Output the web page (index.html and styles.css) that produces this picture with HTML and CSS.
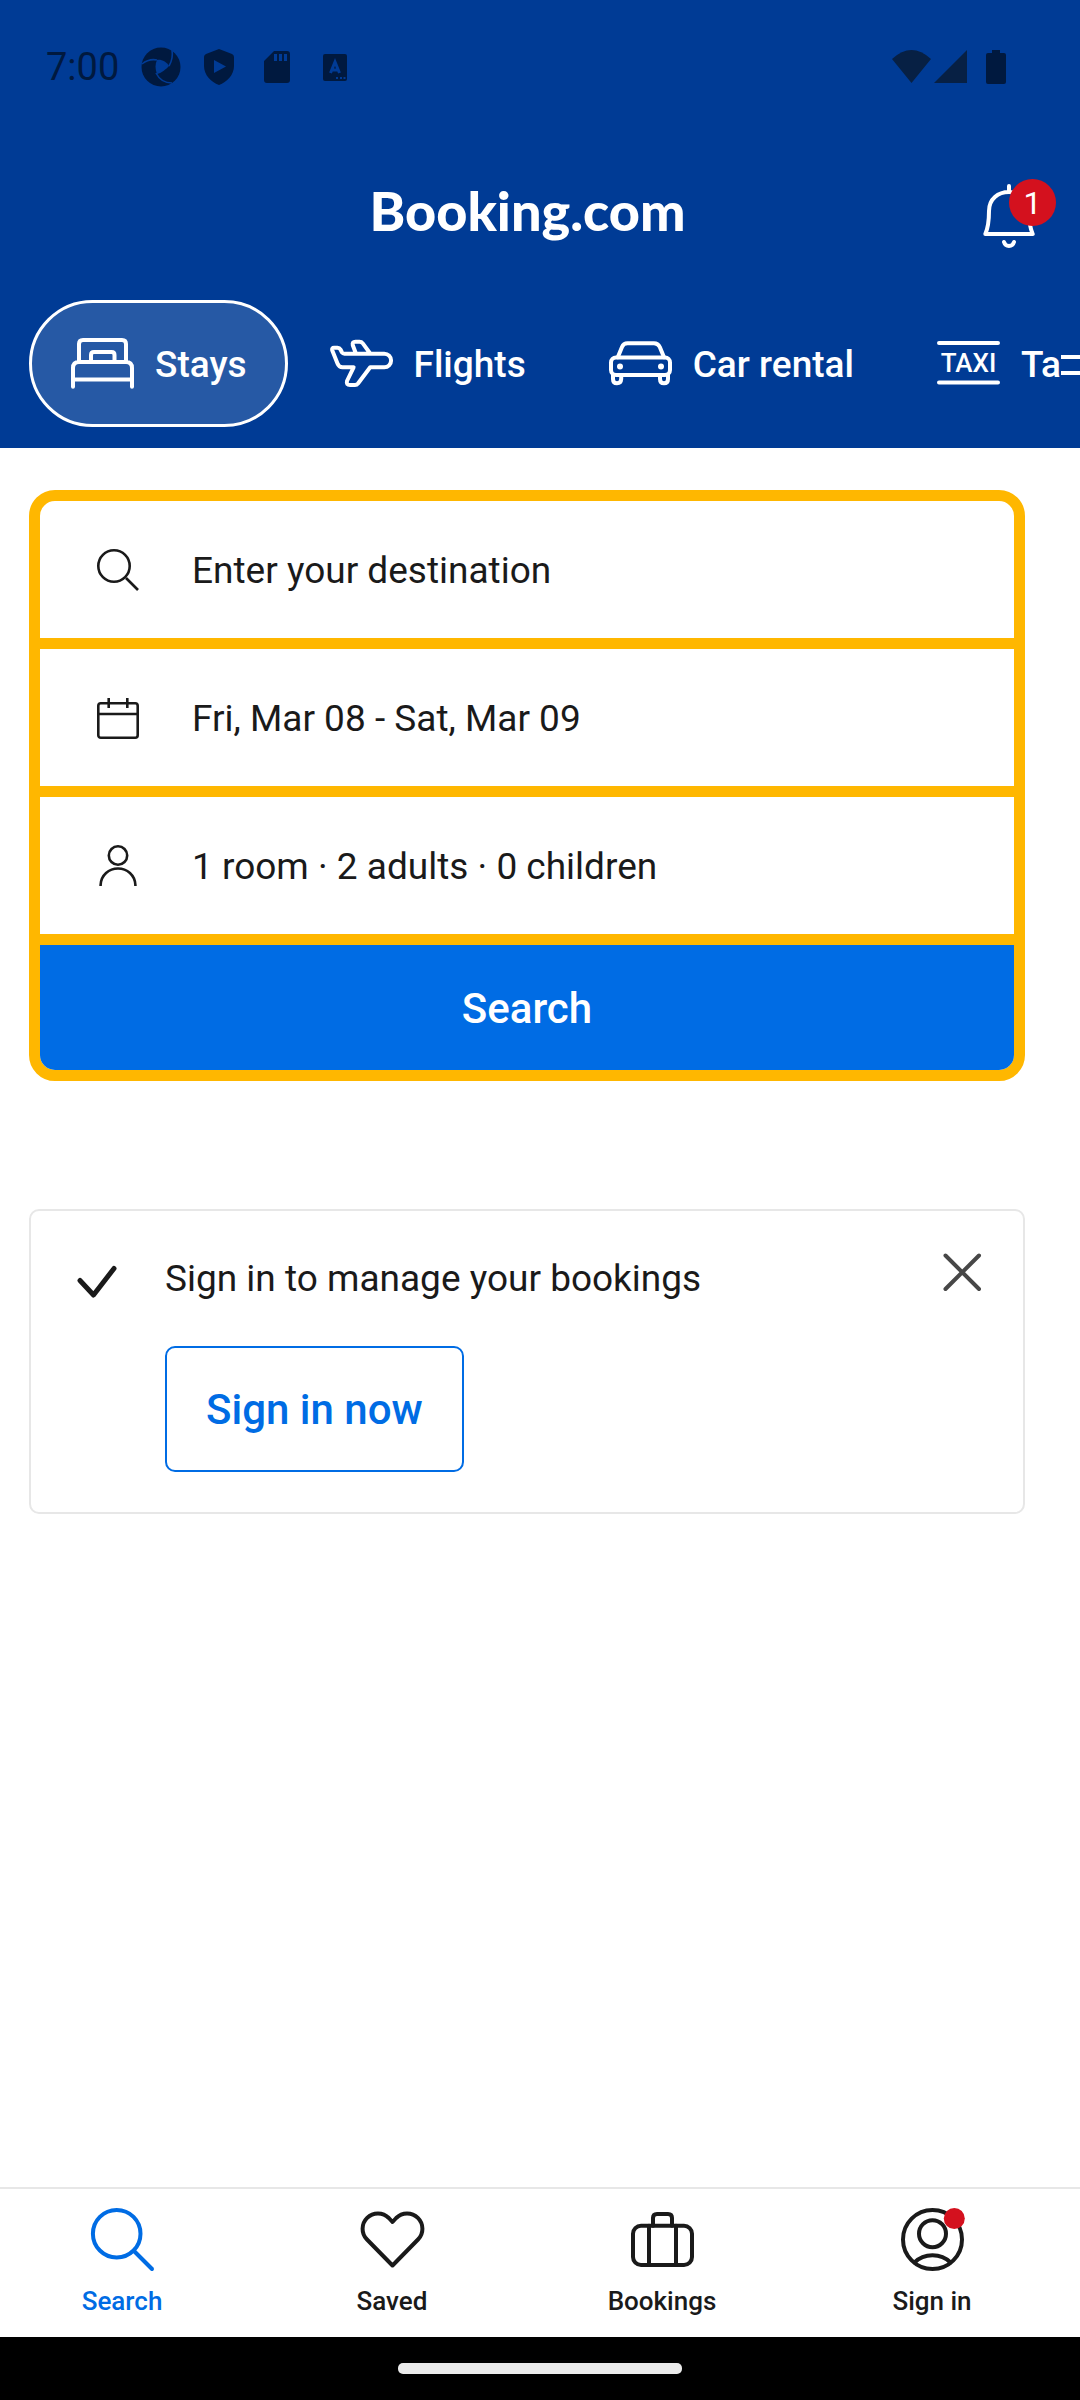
FILE: index.html
```html
<!DOCTYPE html>
<html lang="en">
<head>
<meta charset="utf-8">
<meta name="viewport" content="width=device-width, initial-scale=1">
<title>Booking.com</title>
<link rel="stylesheet" href="styles.css">
</head>
<body>
<header class="header">
  <div class="status">
    <span class="status-time">7:00</span>
    <svg class="status-icon" height="40" viewBox="0 0 40 40"><circle cx="20" cy="20" r="19.5" fill="currentColor"/><path d="M16 13C20 12 26 15 28 19C25 22 21 26 16 27C14 22 14 17 16 13Z" fill="#003b95"/><path d="M1 17C6 13 11 12 16 13M31 3C32 9 31 14 28 19M15 26C18 32 23 36 31 36" fill="none" stroke="#003b95" stroke-width="1.6"/></svg>
    <svg class="status-icon" height="36" viewBox="0 0 30 36"><path d="M15 0L28 5Q30 6 30 8V17C30 26 23 33 15 36C7 33 0 26 0 17V8Q0 6 2 5ZM10 11V24L22 17.500Z" fill="currentColor" fill-rule="evenodd"/></svg>
    <svg class="status-icon" height="32" viewBox="0 0 26 32"><path d="M10 0H23Q26 0 26 3V29Q26 32 23 32H3Q0 32 0 29V10ZM10 3V10H13V3ZM15 3V10H18V3ZM20 3V10H23V3Z" fill="currentColor" fill-rule="evenodd"/></svg>
    <svg class="status-icon" height="28" viewBox="0 0 24 28"><rect y="1" width="24" height="27" rx="2" fill="currentColor"/><path d="M7.500 20L12 9L16.500 20M9 17H15" fill="none" stroke="#003b95" stroke-width="3"/><path d="M13 25h2M17 25h2M20.500 25h2" stroke="#003b95" stroke-width="2"/></svg>
    <span class="status-right">
      <svg width="39" height="34" viewBox="0 0 39 34"><path d="M0 9Q19.500 -9 39 9L19.500 33Z" fill="#072044"/></svg>
      <svg width="33" height="34" viewBox="0 0 33 34"><path d="M0 33L33 0V33Z" fill="#072044"/></svg>
      <svg class="battery" width="20" height="34" viewBox="0 0 20 34"><path d="M6 0H14V3H18Q20 3 20 5V32Q20 34 18 34H2Q0 34 0 32V5Q0 3 2 3H6Z" fill="currentColor"/></svg>
    </span>
  </div>
  <div class="title-row">
    <h1 class="logo">Booking.com</h1>
    <button class="bell" type="button" aria-label="Notifications">
      <svg width="63" height="64" viewBox="0 0 63 64" fill="none" stroke="currentColor" stroke-width="4" stroke-linecap="round" stroke-linejoin="round"><path d="M31 2V8M7.300 50C10 44 11 39 11 27C11 15 20 8 31 8S51 15 51 27C51 39 52 44 54.700 50ZM26 58C27.500 63.300 34.500 63.300 36 58"/></svg>
      <span class="badge">1</span>
    </button>
  </div>
  <nav class="tabs" aria-label="Products">
    <button class="tab tab-active" type="button">
      <svg class="icon" viewBox="0 0 63 63"><path d="M2 54.800V36Q2 30 8 30H55Q61 30 61 36V54.800M2 47.500H61M8 30V12Q8 8 12 8H51Q55 8 55 12V30M20 30V23Q20 20 23 20H40.500Q43.500 20 43.500 23V30"/></svg>
      <span class="label">Stays</span>
    </button>
    <button class="tab" type="button">
      <svg class="icon" viewBox="0 0 63 63"><path d="M4 15.700H7.500Q9.500 15.700 10.500 17.500L12 20.500Q12.800 21.700 14.500 21.700H54.300A6.800 6.800 0 0 1 54.300 35.300H40.200L28 51.500Q26.800 53 25 53H20Q16 53 17 49L23.600 35.300H12.500Q9 35.300 7.500 31.500L2.200 18.200Q1.700 15.700 4 15.700ZM26 21.700L22.800 13.200Q22 9.700 25.500 9.700H29.500Q31.500 9.700 32.800 11.400L40 21.200"/></svg>
      <span class="label">Flights</span>
    </button>
    <button class="tab" type="button">
      <svg class="icon" viewBox="0 0 63 63"><rect x="2" y="25.500" width="59" height="17.500" rx="5"/><path d="M8.800 25.300L13 15Q14.500 11.300 18.500 11.300H45Q49 11.300 50.800 15L55 25.300M4 43V47Q4 51.300 8 51.300T12.200 47V43M51 43V47Q51 51.300 55 51.300T59 47V43"/><circle class="dot" cx="11" cy="34.500" r="3"/><circle class="dot" cx="52" cy="34.500" r="3"/></svg>
      <span class="label">Car rental</span>
    </button>
    <button class="tab" type="button" aria-label="Taxi">
      <svg class="icon" viewBox="0 0 63 63"><path d="M2 11H61M2 50.500H61"/><text class="taxi-sign" x="31.500" y="40" text-anchor="middle">TAXI</text></svg>
      <span class="label label-cut">Ta<span class="cut-letter"></span></span>
    </button>
  </nav>
</header>

<main class="main">
  <form class="search-box">
    <label class="field">
      <svg class="field-icon" viewBox="0 0 42 42"><circle cx="17" cy="17" r="15.700"/><path d="M29 29L41 41"/></svg>
      <input class="label field-input" type="text" placeholder="Enter your destination" aria-label="Destination">
    </label>
    <button class="field" type="button">
      <svg class="field-icon" viewBox="0 0 42 42"><rect x="1.300" y="6.300" width="39.400" height="34.400" rx="2.500"/><path d="M1 17H41M11.700 1V11M30.300 1V11"/></svg>
      <span class="label">Fri, Mar 08 - Sat, Mar 09</span>
    </button>
    <button class="field" type="button">
      <svg class="field-icon" viewBox="0 0 42 42"><circle cx="21" cy="10.500" r="9.200"/><path d="M3.600 41V40C4 30 12 23.500 21 23.500S38 30 38.400 40V41"/></svg>
      <span class="label">1 room · 2 adults · 0 children</span>
    </button>
    <button class="submit" type="submit">Search</button>
  </form>

  <section class="card">
    <svg class="check" width="42" height="42" viewBox="0 0 42 42"><path d="M4 20.500L17.500 35L38 8.500" fill="none" stroke="currentColor" stroke-width="5" stroke-linecap="round" stroke-linejoin="round"/></svg>
    <div class="card-body">
      <p class="card-text">Sign in to manage your bookings</p>
      <button class="signin" type="button">Sign in now</button>
    </div>
    <button class="close" type="button" aria-label="Close">
      <svg width="42" height="42" viewBox="0 0 42 42"><path d="M4.500 4.500L38 38M38 4.500L4.500 38" fill="none" stroke="currentColor" stroke-width="4" stroke-linecap="round"/></svg>
    </button>
  </section>
</main>

<nav class="bottom" aria-label="Main">
  <div class="bottom-links">
    <a class="link link-active" href="#search">
      <svg class="icon" viewBox="0 0 63 63"><circle cx="25.700" cy="25.700" r="23.800"/><path d="M43.500 43.500L61 61"/></svg>
      Search
    </a>
    <a class="link" href="#saved">
      <svg class="icon" viewBox="0 0 63 63"><path d="M31.500 14L27.800 10A15.300 15.300 0 0 0 6 31.500L31.500 57.500L57 31.500A15.300 15.300 0 0 0 35.200 10Z"/></svg>
      Saved
    </a>
    <a class="link" href="#bookings">
      <svg class="icon" viewBox="0 0 63 63"><rect x="2" y="17.700" width="59" height="39.300" rx="8"/><path d="M18 17.700V57M45 17.700V57M22 17.700V10Q22 6 26 6H37Q41 6 41 10V17.700"/></svg>
      Bookings
    </a>
    <a class="link" href="#sign-in">
      <svg class="icon" viewBox="0 0 63 63"><circle cx="31.500" cy="31.500" r="29.500"/><circle cx="31.500" cy="25.700" r="13.500"/><path d="M13.500 54.500C23 44.800 40 44.800 49.500 54.500"/><circle class="alert-dot" cx="53.300" cy="10.500" r="10.500"/></svg>
      Sign in
    </a>
  </div>
</nav>
<div class="system-bar"><span class="handle"></span></div>
</body>
</html>
```
FILE: styles.css
```css
* {
  box-sizing: border-box;
}

body {
  margin: 0;
  min-height: 100vh;
  display: flex;
  flex-direction: column;
  overflow-x: hidden;
  background: #fff;
  color: #1a1a1a;
  font-family: Roboto, "Liberation Sans", sans-serif;
  font-size: 37px;
  line-height: 44px;
}

button,
input {
  margin: 0;
  padding: 0;
  border: 0;
  background: none;
  color: inherit;
  font: inherit;
}

svg {
  display: block;
  flex: none;
  overflow: visible;
}

.label {
  padding-top: 3px;
}

.header {
  background: #003b95;
  color: #fff;
}

.status {
  display: flex;
  align-items: center;
  height: 134px;
  padding: 0 74px 0 46px;
  color: #00193f;
}

.status-time {
  font-size: 38px;
  margin-right: 13px;
}

.status-icon {
  width: 58px;
}

.status-right {
  display: flex;
  gap: 3px;
  margin-left: auto;
}

.battery {
  margin-left: 16px;
}

.title-row {
  display: grid;
  grid-template-columns: 63px 1fr 63px;
  align-items: center;
  height: 166px;
  padding: 0 39px 2px 14px;
}

.logo {
  grid-column: 2;
  margin: 0;
  padding-bottom: 10px;
  text-align: center;
  font-family: Lato, sans-serif;
  font-size: 54px;
  font-weight: 900;
  line-height: 60px;
}

.bell {
  position: relative;
}

.badge {
  position: absolute;
  top: -5px;
  left: 31px;
  width: 47px;
  height: 47px;
  border-radius: 50%;
  background: #d4111e;
  font-size: 32px;
  line-height: 48px;
}

.tabs {
  display: flex;
  overflow: hidden;
  padding: 0 0 21px 29px;
}

.tab {
  display: flex;
  flex: none;
  align-items: center;
  gap: 21px;
  height: 127px;
  padding: 0 38px 0 39px;
  border: 3px solid transparent;
  border-radius: 64px;
  font-weight: 500;
}

.tab-active {
  border-color: #fff;
  background: #2659a5;
}

.label-cut {
  display: flex;
  align-items: center;
}

.cut-letter {
  width: 42px;
  height: 20px;
  border: solid #fff;
  border-width: 4px 0;
}

.icon {
  width: 63px;
  height: 63px;
  fill: none;
  stroke: currentColor;
  stroke-width: 4;
  stroke-linecap: round;
  stroke-linejoin: round;
}

.dot {
  fill: currentColor;
  stroke: none;
}

.taxi-sign {
  fill: currentColor;
  stroke: none;
  font-size: 26px;
  font-weight: 500;
}

.main {
  flex: 1;
  padding: 42px 55px 42px 29px;
}

.search-box {
  display: flex;
  flex-direction: column;
  overflow: hidden;
  border: 11px solid #ffb700;
  border-radius: 26px;
}

.field {
  display: flex;
  align-items: center;
  gap: 53px;
  height: 148px;
  padding: 0 57px;
  border-bottom: 11px solid #ffb700;
  text-align: left;
}

.field-icon {
  width: 42px;
  height: 42px;
  fill: none;
  stroke: currentColor;
  stroke-width: 2.6;
}

.field-input {
  flex: 1;
  min-width: 0;
  outline: 0;
}

.field-input::placeholder {
  color: #1a1a1a;
  opacity: 1;
}

.submit {
  height: 125px;
  padding-top: 2px;
  background: #006ce4;
  color: #fff;
  font-size: 42px;
  font-weight: 500;
}

.card {
  display: flex;
  align-items: flex-start;
  margin-top: 128px;
  padding: 40px 40px 40px 45px;
  border: 2px solid #e7e7e7;
  border-radius: 10px;
}

.check {
  margin-top: 9px;
}

.card-body {
  flex: 1;
  padding-top: 6px;
  margin-left: 47px;
}

.card-text {
  margin: 0 0 45px;
}

.signin {
  display: block;
  height: 126px;
  padding: 2px 39px 0;
  border: 2px solid #006ce4;
  border-radius: 10px;
  color: #006ce4;
  font-size: 42px;
  font-weight: 500;
}

.close {
  color: #474747;
}

.bottom {
  border-top: 2px solid #e7e7e7;
}

.bottom-links {
  display: grid;
  grid-template-columns: repeat(4, 1fr);
  height: 148px;
  margin: 0 13px 0 -13px;
  padding-top: 19px;
}

.link {
  display: flex;
  flex-direction: column;
  align-items: center;
  gap: 14px;
  color: #1a1a1a;
  font-size: 26px;
  font-weight: 500;
  line-height: 32px;
  text-decoration: none;
}

.link-active {
  color: #006ce4;
}

.alert-dot {
  fill: #d4111e;
  stroke: none;
}

.system-bar {
  display: flex;
  justify-content: center;
  align-items: center;
  height: 63px;
  background: #000;
}

.handle {
  width: 284px;
  height: 11px;
  border-radius: 5px;
  background: #ebebeb;
}
```
